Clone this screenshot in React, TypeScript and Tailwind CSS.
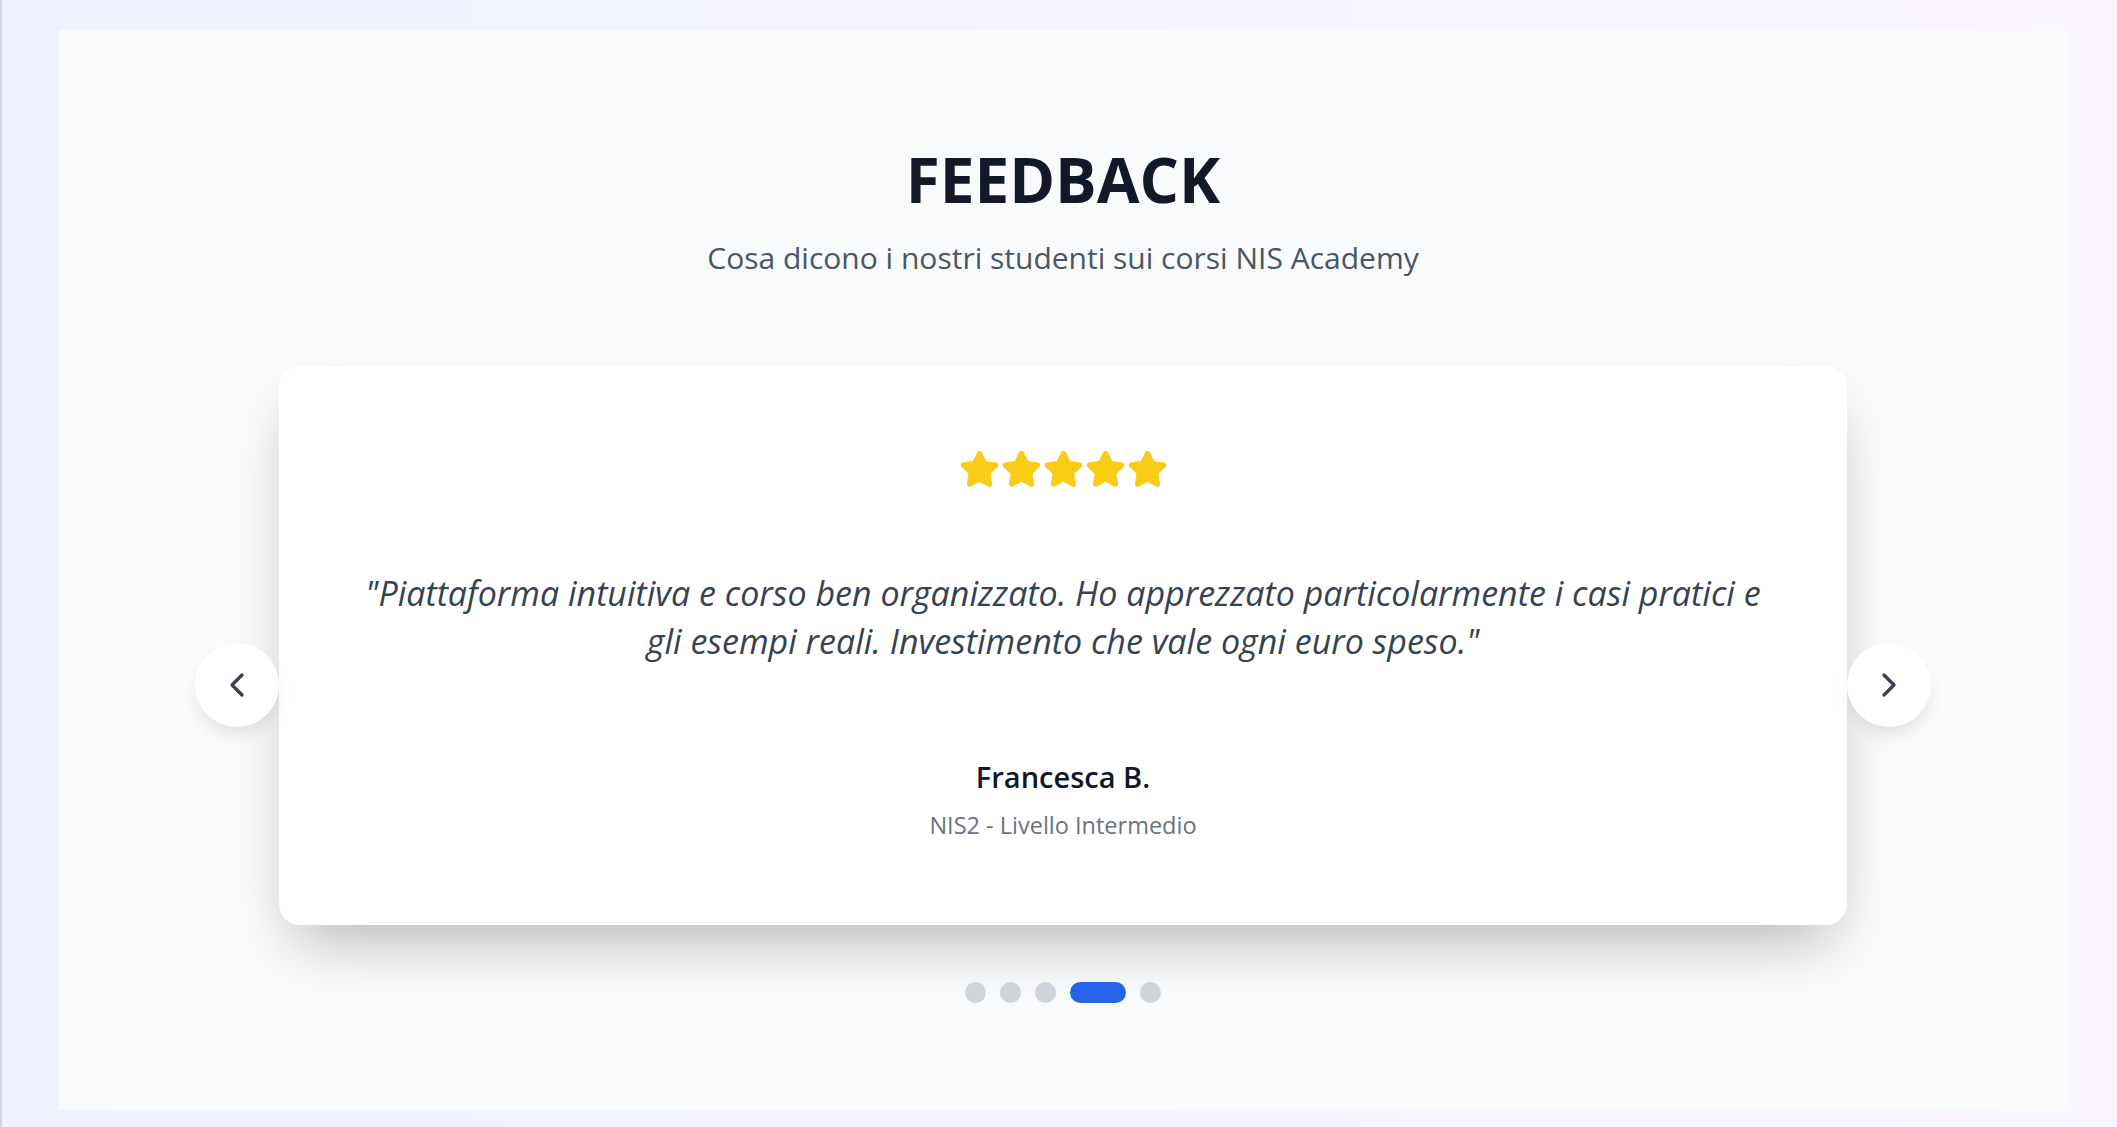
import { useState } from "react";
import { ChevronLeft, ChevronRight, Star } from "lucide-react";

type Review = {
  text: string;
  name: string;
  course: string;
};

const reviews: Review[] = [
  {
    text: "Corso chiaro e completo, ottimo per capire gli obblighi della direttiva NIS2 in azienda.",
    name: "Marco R.",
    course: "NIS2 - Livello Base",
  },
  {
    text: "Docenti preparati e materiali sempre aggiornati. Consigliato a chi lavora nella sicurezza.",
    name: "Laura T.",
    course: "NIS2 - Livello Base",
  },
  {
    text: "Ottimo equilibrio tra teoria e pratica, con esercitazioni utili per il lavoro quotidiano.",
    name: "Giulia M.",
    course: "NIS2 - Livello Avanzato",
  },
  {
    text: "Piattaforma intuitiva e corso ben organizzato. Ho apprezzato particolarmente i casi pratici e gli esempi reali. Investimento che vale ogni euro speso.",
    name: "Francesca B.",
    course: "NIS2 - Livello Intermedio",
  },
  {
    text: "Percorso ben strutturato, con un supporto sempre disponibile durante tutto il corso.",
    name: "Andrea P.",
    course: "NIS2 - Livello Intermedio",
  },
];

export default function App() {
  const [active, setActive] = useState(3);
  const review = reviews[active];

  function go(step: number) {
    setActive((current) => (current + step + reviews.length) % reviews.length);
  }

  return (
    <div
      className="min-h-[1127px] border-l-2 border-[#d6d6d6] bg-gradient-to-r from-[#eef2ff] to-[#faf5ff] pl-[57px] pr-[50px] pt-[30px]"
      style={{ fontFamily: '"Open Sans", "Noto Sans", sans-serif' }}
    >
      <section className="h-[1080px] bg-[#f9fafb] pt-[118px]">
        <h2 className="text-center text-[62px] font-bold leading-[62px] text-[#111827]">FEEDBACK</h2>
        <p className="mt-[30px] text-center text-[30px] leading-[36px] text-[#4b5563]">
          Cosa dicono i nostri studenti sui corsi NIS Academy
        </p>

        <div className="relative mx-auto mt-[90px] w-[1568px]">
          <div className="rounded-[21px] bg-white px-16 pb-[86px] pt-[83px] text-center shadow-[0_30px_60px_-16px_rgba(0,0,0,0.27)]">
            <div className="flex justify-center gap-px">
              {[0, 1, 2, 3, 4].map((i) => (
                <Star key={i} size={41} color="#facc15" fill="#facc15" />
              ))}
            </div>
            <p className="mx-auto mt-[79px] max-w-[1420px] text-[34px] italic leading-[48px] text-[#374151]">
              "{review.text}"
            </p>
            <p className="mt-[94px] text-[29px] font-semibold leading-[36px] text-[#111827]">{review.name}</p>
            <p className="mt-4 text-[23.5px] leading-[28px] text-[#6b7280]">{review.course}</p>
          </div>

          <div className="mt-[57px] flex justify-center gap-[14px]">
            {reviews.map((item, i) => (
              <button
                key={item.name}
                aria-label={`Recensione ${i + 1}`}
                onClick={() => setActive(i)}
                className={
                  i === active
                    ? "h-[21px] w-14 rounded-full bg-[#2563eb]"
                    : "h-[21px] w-[21px] rounded-full bg-[#d1d5db]"
                }
              />
            ))}
          </div>

          <button
            aria-label="Precedente"
            onClick={() => go(-1)}
            className="absolute left-0 top-1/2 flex h-[84px] w-[84px] -translate-x-full -translate-y-1/2 items-center justify-center rounded-full bg-white text-[#374151] shadow-[0_10px_20px_-5px_rgba(0,0,0,0.12)]"
          >
            <ChevronLeft size={40} />
          </button>
          <button
            aria-label="Successivo"
            onClick={() => go(1)}
            className="absolute right-0 top-1/2 flex h-[84px] w-[84px] translate-x-full -translate-y-1/2 items-center justify-center rounded-full bg-white text-[#374151] shadow-[0_10px_20px_-5px_rgba(0,0,0,0.12)]"
          >
            <ChevronRight size={40} />
          </button>
        </div>
      </section>
    </div>
  );
}
